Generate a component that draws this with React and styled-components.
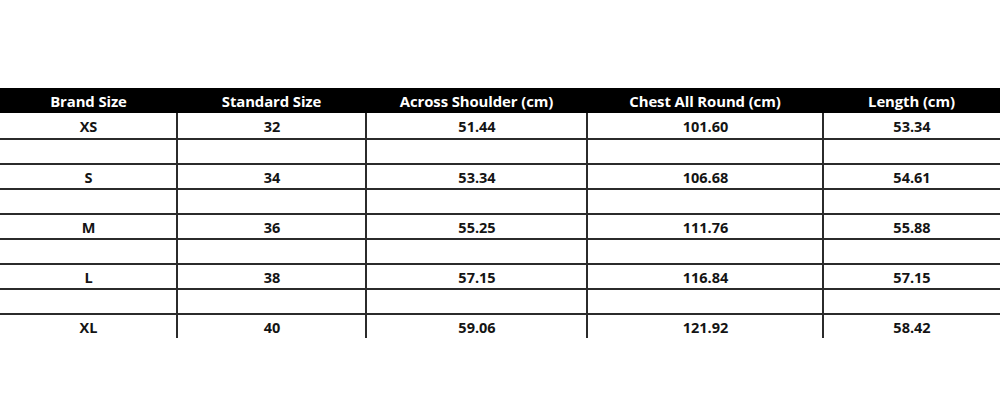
import React from "react";
import styled, { createGlobalStyle } from "styled-components";

const Global = createGlobalStyle`
  html, body { margin: 0; padding: 0; background: #fff; }
  body { font-family: "Open Sans", Lato, sans-serif; }
`;

const Page = styled.div`
  width: 1000px;
  height: 400px;
  padding-top: 88px;
  box-sizing: border-box;
  background: #fff;
`;

const Grid = styled.div`
  display: grid;
  grid-template-columns: 177px 189px 221px 236px 177px;
  width: 1000px;
`;

const HeadCell = styled.div`
  height: 25px;
  background: #000;
  color: #fff;
  font-weight: 700;
  font-size: 14.9px;
  letter-spacing: -0.1px;
  display: flex;
  align-items: center;
  justify-content: center;
  padding-top: 1px;
  box-sizing: border-box;
`;

const Cell = styled.div`
  height: 25px;
  box-sizing: border-box;
  display: flex;
  align-items: center;
  justify-content: center;
  padding-top: 2px;
  font-weight: 700;
  font-size: 14.5px;
  color: #141414;
  border-top: ${(p) => (p.$top ? "2px solid #2b2b2b" : "none")};
  border-left: ${(p) => (p.$left ? "2px solid #2b2b2b" : "none")};
  margin-left: ${(p) => (p.$left ? "-1px" : "0")};
`;

const headers = [
  "Brand Size",
  "Standard Size",
  "Across Shoulder (cm)",
  "Chest All Round (cm)",
  "Length (cm)",
];

const data = [
  ["XS", "32", "51.44", "101.60", "53.34"],
  ["S", "34", "53.34", "106.68", "54.61"],
  ["M", "36", "55.25", "111.76", "55.88"],
  ["L", "38", "57.15", "116.84", "57.15"],
  ["XL", "40", "59.06", "121.92", "58.42"],
];

const rows = [];
data.forEach((r, i) => {
  rows.push(r);
  if (i < data.length - 1) rows.push(["", "", "", "", ""]);
});

export default function App() {
  return (
    <>
      <Global />
      <Page>
        <Grid>
          {headers.map((h) => (
            <HeadCell key={h}>{h}</HeadCell>
          ))}
          {rows.map((r, ri) =>
            r.map((v, ci) => (
              <Cell key={ri + "-" + ci} $top={ri > 0} $left={ci > 0}>
                {v}
              </Cell>
            ))
          )}
        </Grid>
      </Page>
    </>
  );
}
